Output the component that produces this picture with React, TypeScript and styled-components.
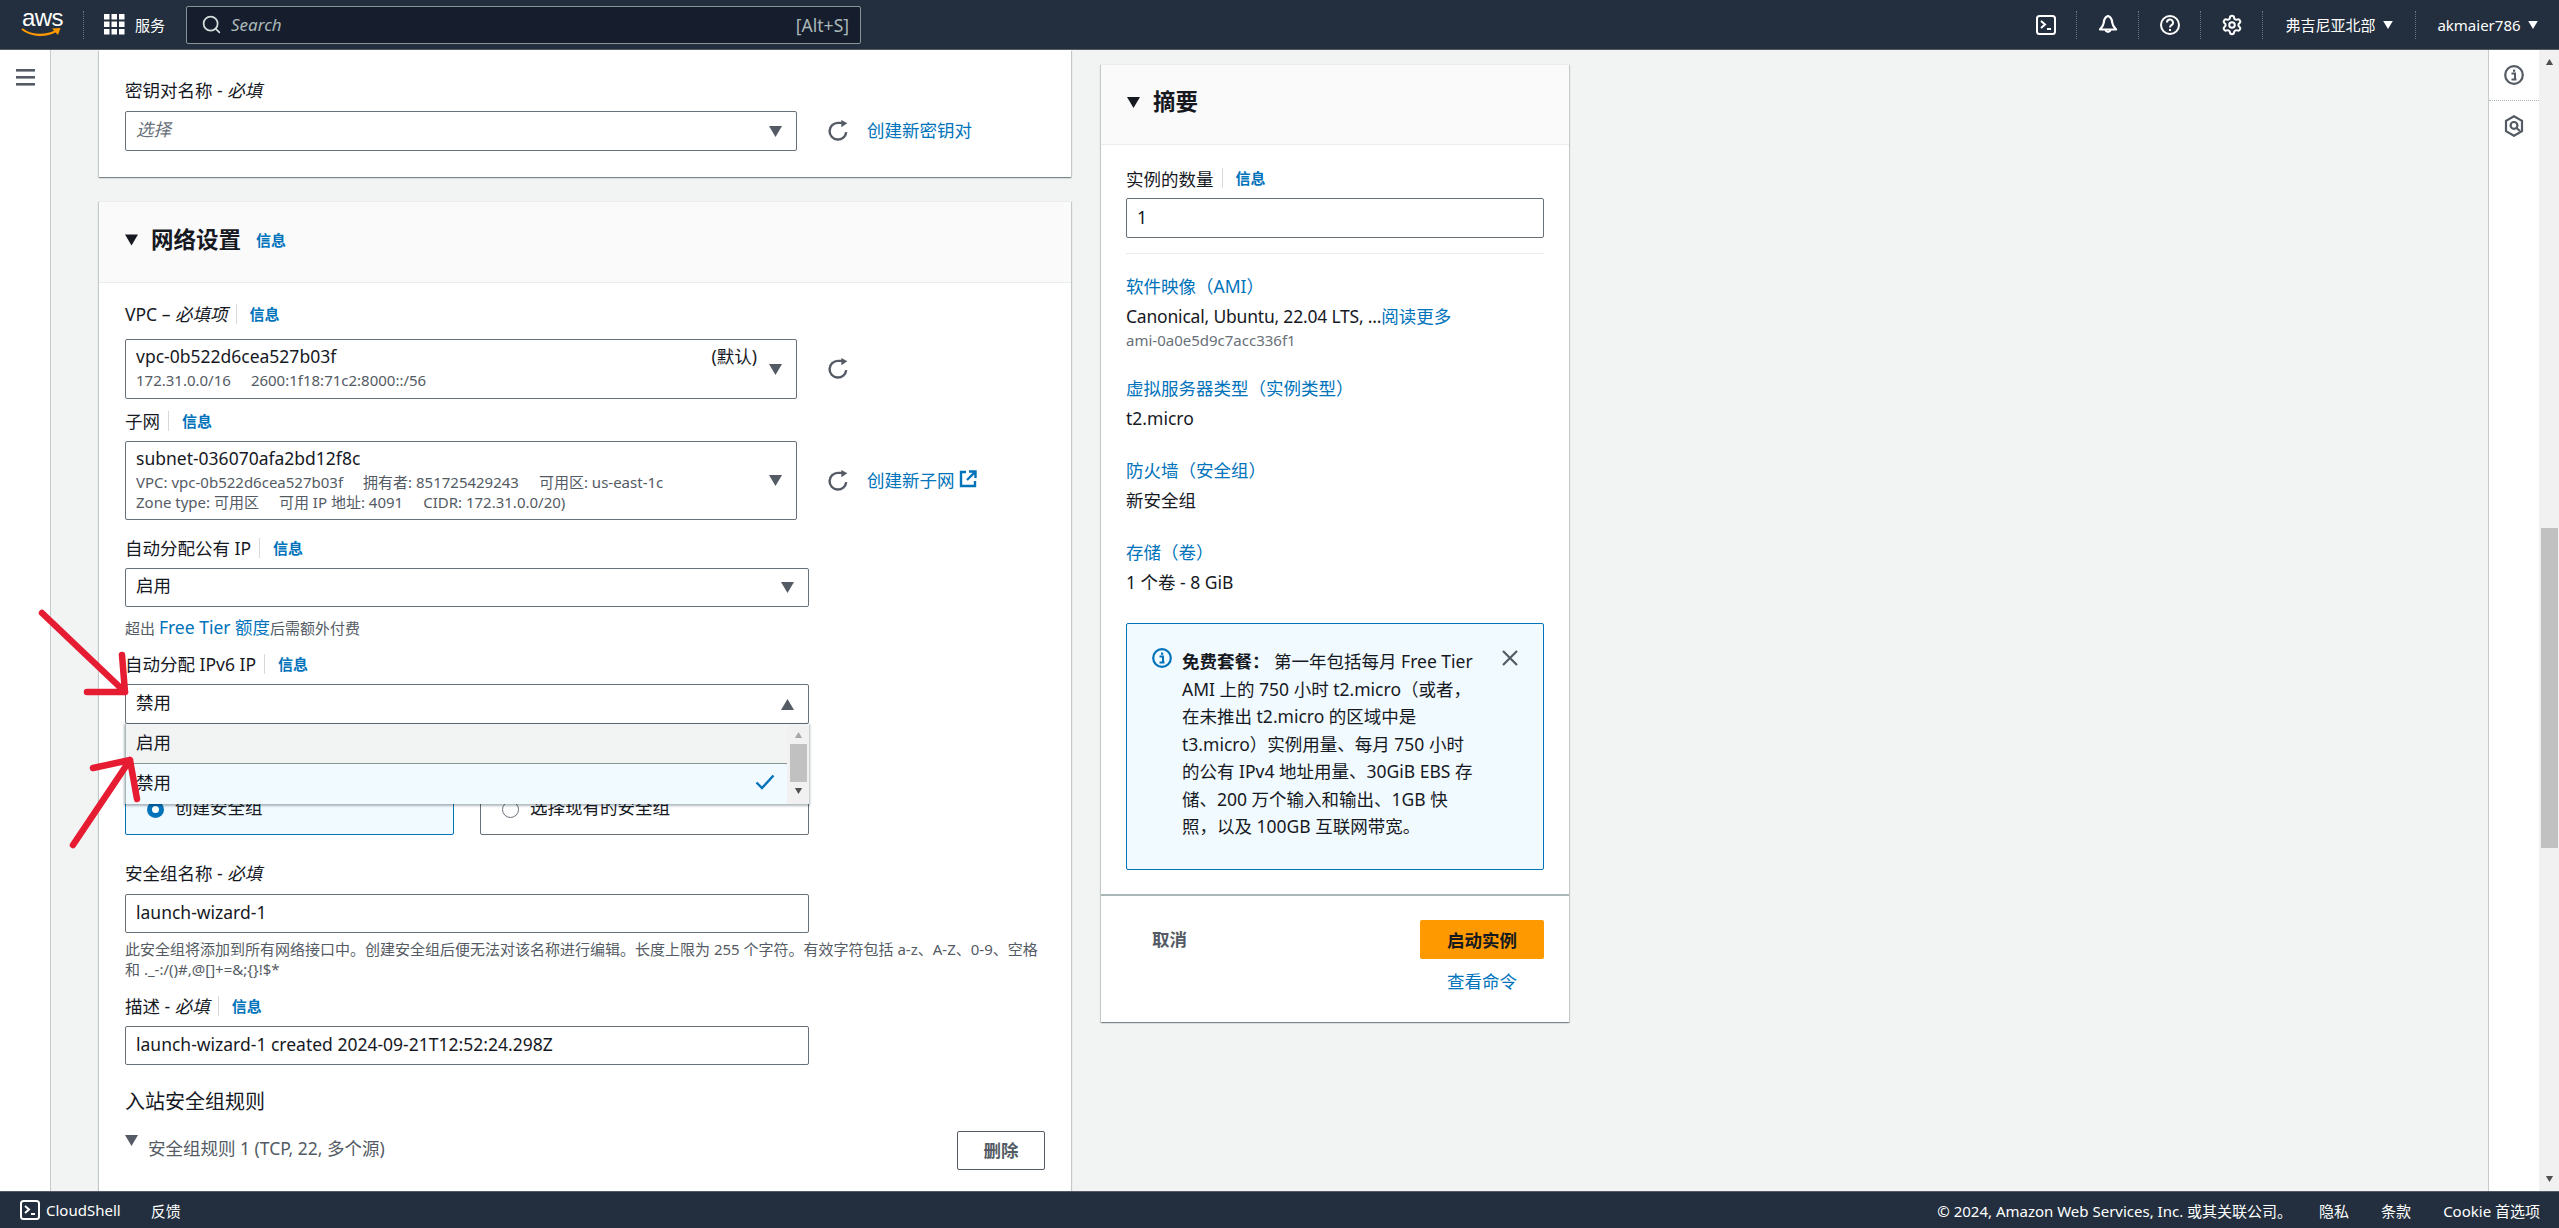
import React from "react";
import styled, { createGlobalStyle } from "styled-components";
import { Search, Settings } from "lucide-react";

const FONT = `"Noto Sans", "Noto Sans CJK SC", sans-serif`;

const Global = createGlobalStyle`
  html, body { margin: 0; padding: 0; overflow: hidden; background: #f2f3f3; }
  body { font-family: ${FONT}; color: #16191f; font-size: 17.5px; }
  * { box-sizing: border-box; }
`;

const Page = styled.div`
  position: relative;
  width: 2559px;
  height: 1228px;
  display: flex;
  flex-direction: column;
  overflow: hidden;
`;

/* ---------- top bar ---------- */
const TopBar = styled.header`
  height: 50px;
  flex: none;
  background: #232f3e;
  border-bottom: 1px solid #545b64;
  display: flex;
  align-items: center;
  color: #fff;
  font-size: 15px;
`;
const LogoBox = styled.div`
  position: relative;
  width: 83px;
  height: 49px;
  flex: none;
  padding: 5px 0 0 22px;
`;
const LogoText = styled.span`
  display: block;
  font-family: "Liberation Sans", sans-serif;
  font-size: 24px;
  line-height: 26px;
  letter-spacing: -0.6px;
  color: #fff;
`;
const Smile = styled.svg`
  position: absolute;
  left: 21px;
  top: 27px;
`;
const BarDivider = styled.span`
  width: 0;
  height: 28px;
  flex: none;
  border-left: 1px dotted #6b7480;
`;
const ServicesButton = styled.div`
  display: flex;
  align-items: center;
  gap: 10px;
  margin-left: 20px;
  width: 82px;
  flex: none;
`;
const SearchBox = styled.div`
  width: 675px;
  height: 38px;
  flex: none;
  background: #161e2d;
  border: 1px solid #879596;
  border-radius: 2px;
  display: flex;
  align-items: center;
  padding: 0 11px 0 14px;
  color: #aab7b8;
`;
const SearchText = styled.span`
  font-style: italic;
  font-size: 17px;
  margin-left: 9px;
  flex: 1;
`;
const SearchHint = styled.span`
  font-size: 17.5px;
`;
const BarSpacer = styled.div`
  flex: 1;
`;
const IconCell = styled.div`
  width: 61px;
  height: 28px;
  flex: none;
  display: flex;
  align-items: center;
  justify-content: center;
`;
const BarMenu = styled.div<{ $w: number }>`
  width: ${(p) => p.$w}px;
  flex: none;
  display: flex;
  align-items: center;
  justify-content: center;
  gap: 7px;
  white-space: nowrap;
`;

/* ---------- body ---------- */
const Body = styled.div`
  flex: 1;
  min-height: 0;
  display: flex;
`;
const LeftNav = styled.nav`
  width: 51px;
  flex: none;
  background: #fff;
  border-right: 1px solid #c6cacc;
  padding: 17px 0 0 16px;
`;
const Main = styled.main`
  flex: 1;
  min-width: 0;
  overflow: hidden;
  background: #f2f3f3;
  display: flex;
  align-items: flex-start;
  gap: 30px;
  padding-left: 48px;
`;
const LeftColumn = styled.div`
  width: 972px;
  flex: none;
  display: flex;
  flex-direction: column;
  gap: 24px;
`;
const Card = styled.section`
  background: #fff;
  box-shadow: 0 1px 1px 0 rgba(0, 28, 36, 0.3), 1px 1px 1px 0 rgba(0, 28, 36, 0.15),
    -1px 1px 1px 0 rgba(0, 28, 36, 0.15);
`;
const KeyBody = styled.div`
  height: 127px;
  padding: 31px 26px 0;
`;
const CardHeader = styled.div<{ $h: number; $gap: number }>`
  height: ${(p) => p.$h}px;
  background: #fafafa;
  border-top: 1px solid #eaeded;
  border-bottom: 1px solid #eaeded;
  display: flex;
  align-items: center;
  gap: ${(p) => p.$gap}px;
  padding: 0 0 5px 26px;
`;
const CardTitle = styled.h2`
  margin: 0;
  font-size: 22.5px;
  font-weight: 700;
  line-height: 28px;
`;
const NetworkBody = styled.div`
  padding: 22px 26px 60px;
`;
const Label = styled.div<{ $top?: number; $gap?: number }>`
  display: flex;
  align-items: center;
  height: 20px;
  padding-bottom: 3px;
  line-height: 20px;
  margin-top: ${(p) => p.$top ?? 0}px;
  margin-bottom: ${(p) => p.$gap ?? 9}px;
  font-size: 17.5px;
  white-space: nowrap;
  em { font-style: italic; }
`;
const InfoLink = styled.a`
  display: inline-block;
  margin-left: 8px;
  padding-left: 13px;
  border-left: 1px solid #d5dbdb;
  font-size: 15px;
  line-height: 20px;
  font-weight: 700;
  color: #0073bb;
`;
const TitleInfo = styled.a`
  font-size: 15px;
  font-weight: 700;
  color: #0073bb;
  margin-left: 2px;
`;
const ControlRow = styled.div`
  display: flex;
  align-items: center;
`;
const Select = styled.div<{ $w: number; $h: number; $placeholder?: boolean }>`
  position: relative;
  width: ${(p) => p.$w}px;
  height: ${(p) => p.$h}px;
  flex: none;
  background: #fff;
  border: 1px solid #687078;
  border-radius: 2px;
  display: flex;
  align-items: center;
  padding: 0 14px 0 10px;
  gap: 12px;
  font-size: 17.5px;
  color: ${(p) => (p.$placeholder ? "#687078" : "#16191f")};
  font-style: ${(p) => (p.$placeholder ? "italic" : "normal")};
`;
const SelectValue = styled.div`
  flex: 1;
  min-width: 0;
  padding-bottom: 6px;
`;
const SelectMain = styled.div`
  line-height: 28px;
  display: flex;
  justify-content: space-between;
`;
const SelectSub = styled.div`
  display: flex;
  gap: 20px;
  font-size: 15px;
  line-height: 20px;
  color: #545b64;
  white-space: nowrap;
`;
const RefreshBox = styled.div`
  margin-left: 30px;
  width: 22px;
  height: 22px;
  flex: none;
`;
const SideLink = styled.a`
  margin-left: 18px;
  padding-bottom: 3px;
  color: #0073bb;
  font-size: 17.5px;
  display: inline-flex;
  align-items: center;
  gap: 4px;
  white-space: nowrap;
`;
const Hint = styled.div<{ $top: number }>`
  margin-top: ${(p) => p.$top}px;
  font-size: 15px;
  line-height: 20px;
  color: #545b64;
  white-space: nowrap;
`;
const HintLink = styled.a`
  color: #0073bb;
  font-size: 17.5px;
`;
const Dropdown = styled.div`
  position: absolute;
  left: -1px;
  top: 39px;
  width: 684px;
  height: 80px;
  z-index: 2;
  display: flex;
  background: #fff;
  box-shadow: 0 1px 2px 1px rgba(0, 28, 36, 0.3);
  font-style: normal;
`;
const OptionList = styled.div`
  flex: 1;
  display: flex;
  flex-direction: column;
`;
const Option = styled.div<{ $kind: "hover" | "selected" }>`
  height: 40px;
  display: flex;
  align-items: center;
  justify-content: space-between;
  padding: 0 12px 5px 10px;
  background: ${(p) => (p.$kind === "hover" ? "#f2f3f3" : "#f1faff")};
  border-bottom: ${(p) => (p.$kind === "hover" ? "1px solid #879596" : "none")};
  border-left: 1px solid #aab7b8;
`;
const MiniScroll = styled.div`
  width: 22px;
  flex: none;
  background: #f1f1f1;
  display: flex;
  flex-direction: column;
  align-items: center;
  padding-top: 8px;
`;
const MiniThumb = styled.div`
  width: 17px;
  height: 38px;
  background: #c1c1c1;
  margin: 6px 0 6px;
`;
const TileRow = styled.div`
  margin-top: 52px;
  display: grid;
  grid-template-columns: 329px 329px;
  gap: 26px;
`;
const Tile = styled.div<{ $on?: boolean }>`
  height: 59px;
  border: 1px solid ${(p) => (p.$on ? "#0073bb" : "#687078")};
  background: ${(p) => (p.$on ? "#f1faff" : "#fff")};
  border-radius: 2px;
  display: flex;
  align-items: flex-end;
  gap: 11px;
  padding: 0 0 13px 21px;
  line-height: 28px;
`;
const Radio = styled.span<{ $on?: boolean }>`
  width: 17px;
  height: 17px;
  flex: none;
  border-radius: 50%;
  border: ${(p) => (p.$on ? "5px solid #0073bb" : "1px solid #687078")};
  background: #fff;
  margin-bottom: 3px;
`;
const TextInput = styled.div<{ $h?: number; $w?: string }>`
  width: ${(p) => p.$w ?? "684px"};
  height: ${(p) => p.$h ?? 39}px;
  border: 1px solid #687078;
  border-radius: 2px;
  background: #fff;
  display: flex;
  align-items: center;
  padding: 0 10px 3px;
  font-size: 17.5px;
`;
const SectionHeading = styled.h3`
  margin: 25px 0 0;
  font-size: 20px;
  font-weight: 400;
  line-height: 24px;
`;
const RuleRow = styled.div`
  margin-top: 17px;
  width: 920px;
  height: 39px;
  display: flex;
  align-items: center;
`;
const RuleCaret = styled.span`
  width: 23px;
  flex: none;
  align-self: flex-start;
  line-height: 0;
  padding-top: 4px;
`;
const RuleText = styled.span`
  flex: 1;
  padding-bottom: 6px;
  color: #545b64;
  font-size: 17.5px;
`;
const OutlineButton = styled.button`
  width: 88px;
  height: 39px;
  background: #fff;
  border: 1px solid #545b64;
  border-radius: 2px;
  font-family: inherit;
  font-size: 17.5px;
  font-weight: 700;
  color: #545b64;
  padding: 0 0 3px;
`;

/* ---------- summary ---------- */
const SummaryCard = styled(Card)`
  width: 468px;
  flex: none;
  margin-top: 14px;
`;
const SummaryBody = styled.div`
  padding: 19px 25px 24px;
  border-bottom: 2px solid #aab7b8;
`;
const SummaryLabel = styled.div`
  display: flex;
  align-items: center;
  height: 28px;
  font-size: 17.5px;
  margin-bottom: 6px;
`;
const Rule = styled.hr`
  margin: 15px 0 0;
  border: 0;
  border-top: 1px solid #eaeded;
`;
const Term = styled.div<{ $top: number }>`
  margin-top: ${(p) => p.$top}px;
  line-height: 28px;
  color: #0073bb;
`;
const Value = styled.div`
  margin-top: 2px;
  line-height: 28px;
  white-space: nowrap;
`;
const TightSpan = styled.span`
  letter-spacing: -0.2px;
`;
const BlueSpan = styled.span`
  color: #0073bb;
`;
const AmiId = styled.div`
  margin-top: 1px;
  font-size: 15px;
  line-height: 18px;
  color: #687078;
`;
const InfoBox = styled.div`
  margin-top: 27px;
  height: 247px;
  background: #f1faff;
  border: 1px solid #0073bb;
  border-radius: 2px;
  display: flex;
  padding: 24px 0 0 25px;
  gap: 10px;
`;
const InfoIconBox = styled.div`
  width: 20px;
  flex: none;
  line-height: 0;
`;
const InfoText = styled.div`
  width: 305px;
  flex: none;
  line-height: 27.5px;
  white-space: nowrap;
  strong { font-weight: 700; }
`;
const CloseBox = styled.div`
  margin: 2px 0 0 5px;
  line-height: 0;
`;
const SummaryFooter = styled.div`
  height: 126px;
  display: flex;
  justify-content: space-between;
  padding: 24px 25px 0 51px;
`;
const CancelText = styled.span`
  font-weight: 700;
  color: #545b64;
  line-height: 38px;
`;
const FooterActions = styled.div`
  width: 124px;
  display: flex;
  flex-direction: column;
  align-items: center;
`;
const PrimaryButton = styled.button`
  width: 124px;
  height: 39px;
  background: #ff9900;
  border: 0;
  border-radius: 2px;
  padding: 0;
  font-family: inherit;
  font-size: 17.5px;
  font-weight: 700;
  color: #16191f;
`;
const CommandLink = styled.a`
  margin-top: 8px;
  line-height: 28px;
  color: #0073bb;
`;

/* ---------- right rail / scrollbar ---------- */
const RightRail = styled.aside`
  width: 51px;
  flex: none;
  background: #fff;
  border-left: 1px solid #c6cacc;
  display: flex;
  flex-direction: column;
`;
const RailItem = styled.div<{ $h: number; $line?: boolean }>`
  height: ${(p) => p.$h}px;
  display: flex;
  align-items: center;
  justify-content: center;
  border-bottom: ${(p) => (p.$line ? "1px dotted #aab7b8" : "none")};
`;
const PageScroll = styled.div`
  width: 20px;
  flex: none;
  background: #f1f1f1;
  display: flex;
  flex-direction: column;
  align-items: center;
  justify-content: space-between;
  position: relative;
  padding: 9px 0 9px;
  line-height: 0;
`;
const PageThumb = styled.div`
  position: absolute;
  left: 2px;
  top: 478px;
  width: 17px;
  height: 320px;
  background: #c1c1c1;
`;

/* ---------- footer ---------- */
const Footer = styled.footer`
  height: 37px;
  flex: none;
  background: #232f3e;
  border-top: 1px solid #545b64;
  color: #fff;
  font-size: 15px;
  display: flex;
  align-items: center;
  padding: 0 19px 0 20px;
  white-space: nowrap;
`;
const FooterLeft = styled.div`
  display: flex;
  align-items: center;
  gap: 6px;
  flex: 1;
`;
const FooterFeedback = styled.span`
  margin-left: 24px;
`;
const FooterLinks = styled.div`
  display: flex;
  gap: 32px;
`;
const Copyright = styled.span`
  margin-right: 27px;
`;
const Annotation = styled.svg`
  position: absolute;
  left: 0;
  top: 0;
  z-index: 5;
  pointer-events: none;
`;

/* ---------- drawings ---------- */
const Caret = ({ up, w = 13, h = 11, color = "#545b64" }: { up?: boolean; w?: number; h?: number; color?: string }) => (
  <svg width={w} height={h} viewBox="0 0 12 10" style={{ flex: "none" }}>
    <path d={up ? "M6 0 L12 10 H0 Z" : "M0 0 H12 L6 10 Z"} fill={color} />
  </svg>
);
const Refresh = () => (
  <svg width="22" height="22" viewBox="0 0 20 20" fill="none">
    <path d="M17.5 11 A7.6 7.6 0 1 1 10 2.6 H15" stroke="#545b64" strokeWidth="2.2" />
    <path d="M13 0 L18.5 3 L13 6.5 Z" fill="#545b64" />
  </svg>
);
const External = () => (
  <svg width="18" height="18" viewBox="0 0 18 18" fill="none" stroke="#0073bb" strokeWidth="2.4">
    <path d="M7 2 H2 V16 H16 V11" />
    <path d="M8 10 L16 2 M10 1.5 H16.5 V8" />
  </svg>
);
const TerminalIcon = ({ s = 20 }: { s?: number }) => (
  <svg width={s} height={s} viewBox="0 0 20 20" fill="none" stroke="#fff" strokeWidth="2">
    <rect x="1" y="1" width="18" height="18" rx="2.5" />
    <path d="M5 6 L9 9.5 L5 13 M11 14 H15" />
  </svg>
);
const Bell = () => (
  <svg width="20" height="20" viewBox="0 0 20 20" fill="none" stroke="#fff" strokeWidth="2.2" strokeLinejoin="round">
    <path d="M10 1 C13 2 14 4.5 14.2 7.5 C14.5 10.5 16.5 12.5 18 14.5 H2 C3.5 12.5 5.5 10.5 5.8 7.5 C6 4.5 7 2 10 1 Z" />
    <path d="M7.5 15 A2.6 2.6 0 0 0 12.5 15" />
  </svg>
);
const Help = () => (
  <svg width="20" height="20" viewBox="0 0 20 20" fill="none" stroke="#fff" strokeWidth="2">
    <circle cx="10" cy="10" r="9" />
    <path d="M7 7.6 A3 3 0 1 1 11.4 10.2 C10.3 10.9 10 11.4 10 12.6" />
    <path d="M10 14 V16" />
  </svg>
);
const InfoCircle = ({ color, s = 20 }: { color: string; s?: number }) => (
  <svg width={s} height={s} viewBox="0 0 20 20" fill="none">
    <circle cx="10" cy="10" r="8.8" stroke={color} strokeWidth="2.2" />
    <path d="M7.5 8.5 H11 V14 M7.5 14.5 H12.5" stroke={color} strokeWidth="2" />
    <rect x="9" y="4.6" width="2.2" height="2.2" fill={color} />
  </svg>
);
const HexSearch = () => (
  <svg width="20" height="22" viewBox="0 0 20 22" fill="none" stroke="#545b64" strokeWidth="2.2">
    <path d="M10 1.2 L18 5.8 V16.2 L10 20.8 L2 16.2 V5.8 Z" />
    <circle cx="10" cy="10.4" r="3.4" />
    <path d="M12.5 13 L16 16" />
  </svg>
);

const Info = () => <InfoLink>信息</InfoLink>;

export default function App() {
  return (
    <Page>
      <Global />
      <TopBar>
        <LogoBox>
          <LogoText>aws</LogoText>
          <Smile width="42" height="12" viewBox="0 0 42 12" fill="none">
            <path d="M1 2 C10 9 24 10 35 4" stroke="#ff9900" strokeWidth="2.2" />
            <path d="M31 1.6 L39.5 1 L37 8 Z" fill="#ff9900" />
          </Smile>
        </LogoBox>
        <BarDivider />
        <ServicesButton>
          <svg width="21" height="21" viewBox="0 0 21 21" fill="#fff">
            {[0, 7.5, 15].flatMap((y) =>
              [0, 7.5, 15].map((x) => <rect key={`${x}-${y}`} x={x} y={y} width="5.5" height="5.5" />)
            )}
          </svg>
          <span>服务</span>
        </ServicesButton>
        <SearchBox>
          <Search size={21} color="#d5dbdb" strokeWidth={2} />
          <SearchText>Search</SearchText>
          <SearchHint>[Alt+S]</SearchHint>
        </SearchBox>
        <BarSpacer />
        <IconCell><TerminalIcon /></IconCell>
        <BarDivider />
        <IconCell><Bell /></IconCell>
        <BarDivider />
        <IconCell><Help /></IconCell>
        <BarDivider />
        <IconCell><Settings size={22} color="#fff" strokeWidth={2.2} /></IconCell>
        <BarDivider />
        <BarMenu $w={152}>弗吉尼亚北部<Caret w={10} h={8} color="#fff" /></BarMenu>
        <BarDivider />
        <BarMenu $w={143}>akmaier786<Caret w={10} h={8} color="#fff" /></BarMenu>
      </TopBar>

      <Body>
        <LeftNav>
          <svg width="19" height="17" viewBox="0 0 19 17" fill="#545b64">
            <rect x="0" y="0" width="19" height="2.6" />
            <rect x="0" y="7" width="19" height="2.6" />
            <rect x="0" y="14" width="19" height="2.6" />
          </svg>
        </LeftNav>
        <Main>
          <LeftColumn>
            <Card>
              <KeyBody>
                <Label $gap={10}>密钥对名称 -&nbsp;<em>必填</em></Label>
                <ControlRow>
                  <Select $w={672} $h={40} $placeholder>
                    <SelectValue>选择</SelectValue>
                    <Caret />
                  </Select>
                  <RefreshBox><Refresh /></RefreshBox>
                  <SideLink>创建新密钥对</SideLink>
                </ControlRow>
              </KeyBody>
            </Card>
            <Card>
              <CardHeader $h={82} $gap={13}>
                <Caret w={13} h={12} color="#16191f" />
                <CardTitle>网络设置</CardTitle>
                <TitleInfo>信息</TitleInfo>
              </CardHeader>
              <NetworkBody>
                <Label $gap={14}>VPC –&nbsp;<em>必填项</em><Info /></Label>
                <ControlRow>
                  <Select $w={672} $h={60}>
                    <SelectValue>
                      <SelectMain><span>vpc-0b522d6cea527b03f</span><span>(默认)</span></SelectMain>
                      <SelectSub><span>172.31.0.0/16</span><span>2600:1f18:71c2:8000::/56</span></SelectSub>
                    </SelectValue>
                    <Caret />
                  </Select>
                  <RefreshBox><Refresh /></RefreshBox>
                </ControlRow>

                <Label $top={13}>子网<Info /></Label>
                <ControlRow>
                  <Select $w={672} $h={79}>
                    <SelectValue>
                      <SelectMain>subnet-036070afa2bd12f8c</SelectMain>
                      <SelectSub><span>VPC: vpc-0b522d6cea527b03f</span><span>拥有者: 851725429243</span><span>可用区: us-east-1c</span></SelectSub>
                      <SelectSub><span>Zone type: 可用区</span><span>可用 IP 地址: 4091</span><span>CIDR: 172.31.0.0/20)</span></SelectSub>
                    </SelectValue>
                    <Caret />
                  </Select>
                  <RefreshBox><Refresh /></RefreshBox>
                  <SideLink>创建新子网<External /></SideLink>
                </ControlRow>

                <Label $top={19}>自动分配公有 IP<Info /></Label>
                <Select $w={684} $h={39}>
                  <SelectValue>启用</SelectValue>
                  <Caret />
                </Select>
                <Hint $top={10}>超出 <HintLink>Free Tier 额度</HintLink>后需额外付费</Hint>

                <Label $top={17}>自动分配 IPv6 IP<Info /></Label>
                <Select $w={684} $h={40}>
                  <SelectValue>禁用</SelectValue>
                  <Caret up />
                  <Dropdown>
                    <OptionList>
                      <Option $kind="hover">启用</Option>
                      <Option $kind="selected">
                        禁用
                        <svg width="20" height="16" viewBox="0 0 20 16" fill="none" stroke="#0073bb" strokeWidth="2.4">
                          <path d="M1.5 8.5 L7 14 L18.5 1.5" />
                        </svg>
                      </Option>
                    </OptionList>
                    <MiniScroll>
                      <Caret up w={9} h={6} color="#a8a8a8" />
                      <MiniThumb />
                      <Caret w={9} h={6} color="#505050" />
                    </MiniScroll>
                  </Dropdown>
                </Select>

                <TileRow>
                  <Tile $on><Radio $on />创建安全组</Tile>
                  <Tile><Radio />选择现有的安全组</Tile>
                </TileRow>

                <Label $top={29} $gap={10}>安全组名称 -&nbsp;<em>必填</em></Label>
                <TextInput>launch-wizard-1</TextInput>
                <Hint $top={6}>
                  此安全组将添加到所有网络接口中。创建安全组后便无法对该名称进行编辑。长度上限为 255 个字符。有效字符包括 a-z、A-Z、0-9、空格
                  <br />
                  和 ._-:/()#,@[]+=&;{"{}"}!$*
                </Hint>
                <Label $top={18}>描述 -&nbsp;<em>必填</em><Info /></Label>
                <TextInput>launch-wizard-1 created 2024-09-21T12:52:24.298Z</TextInput>
                <SectionHeading>入站安全组规则</SectionHeading>
                <RuleRow>
                  <RuleCaret><Caret /></RuleCaret>
                  <RuleText>安全组规则 1 (TCP, 22, 多个源)</RuleText>
                  <OutlineButton>删除</OutlineButton>
                </RuleRow>
              </NetworkBody>
            </Card>
          </LeftColumn>

          <SummaryCard>
            <CardHeader $h={81} $gap={13}>
              <Caret w={13} h={11} color="#16191f" />
              <CardTitle>摘要</CardTitle>
            </CardHeader>
            <SummaryBody>
              <SummaryLabel>实例的数量<Info /></SummaryLabel>
              <TextInput $h={40} $w="100%">1</TextInput>
              <Rule />
              <Term $top={18}>软件映像（AMI）</Term>
              <Value><TightSpan>Canonical, Ubuntu, 22.04 LTS, ...</TightSpan><BlueSpan>阅读更多</BlueSpan></Value>
              <AmiId>ami-0a0e5d9c7acc336f1</AmiId>
              <Term $top={25}>虚拟服务器类型（实例类型）</Term>
              <Value>t2.micro</Value>
              <Term $top={24}>防火墙（安全组）</Term>
              <Value>新安全组</Value>
              <Term $top={24}>存储（卷）</Term>
              <Value>1 个卷 - 8 GiB</Value>
              <InfoBox>
                <InfoIconBox><InfoCircle color="#0073bb" /></InfoIconBox>
                <InfoText>
                  <strong>免费套餐：</strong> 第一年包括每月 Free Tier<br />
                  AMI 上的 750 小时 t2.micro（或者，<br />
                  在未推出 t2.micro 的区域中是<br />
                  t3.micro）实例用量、每月 750 小时<br />
                  的公有 IPv4 地址用量、30GiB EBS 存<br />
                  储、200 万个输入和输出、1GB 快<br />
                  照，以及 100GB 互联网带宽。
                </InfoText>
                <CloseBox>
                  <svg width="16" height="16" viewBox="0 0 16 16" stroke="#545b64" strokeWidth="2.2">
                    <path d="M1 1 L15 15 M15 1 L1 15" />
                  </svg>
                </CloseBox>
              </InfoBox>
            </SummaryBody>
            <SummaryFooter>
              <CancelText>取消</CancelText>
              <FooterActions>
                <PrimaryButton>启动实例</PrimaryButton>
                <CommandLink>查看命令</CommandLink>
              </FooterActions>
            </SummaryFooter>
          </SummaryCard>
        </Main>
        <RightRail>
          <RailItem $h={51} $line><InfoCircle color="#545b64" /></RailItem>
          <RailItem $h={50}><HexSearch /></RailItem>
        </RightRail>
        <PageScroll>
          <Caret up w={9} h={6} color="#505050" />
          <PageThumb />
          <Caret w={9} h={6} color="#505050" />
        </PageScroll>
      </Body>

      <Footer>
        <FooterLeft>
          <TerminalIcon s={20} />
          <span>CloudShell</span>
          <FooterFeedback>反馈</FooterFeedback>
        </FooterLeft>
        <Copyright>© 2024, Amazon Web Services, Inc. 或其关联公司。</Copyright>
        <FooterLinks>
          <span>隐私</span>
          <span>条款</span>
          <span>Cookie 首选项</span>
        </FooterLinks>
      </Footer>

      <Annotation width="200" height="860" viewBox="0 0 200 860" fill="none" stroke="#e61c32" strokeWidth="6.5" strokeLinecap="round" strokeLinejoin="round">
        <path d="M42 613 L125 692 M122 655 L125 692 L87 692" />
        <path d="M73 845 L130 760 M93 768 L130 760 L137 799" />
      </Annotation>
    </Page>
  );
}
